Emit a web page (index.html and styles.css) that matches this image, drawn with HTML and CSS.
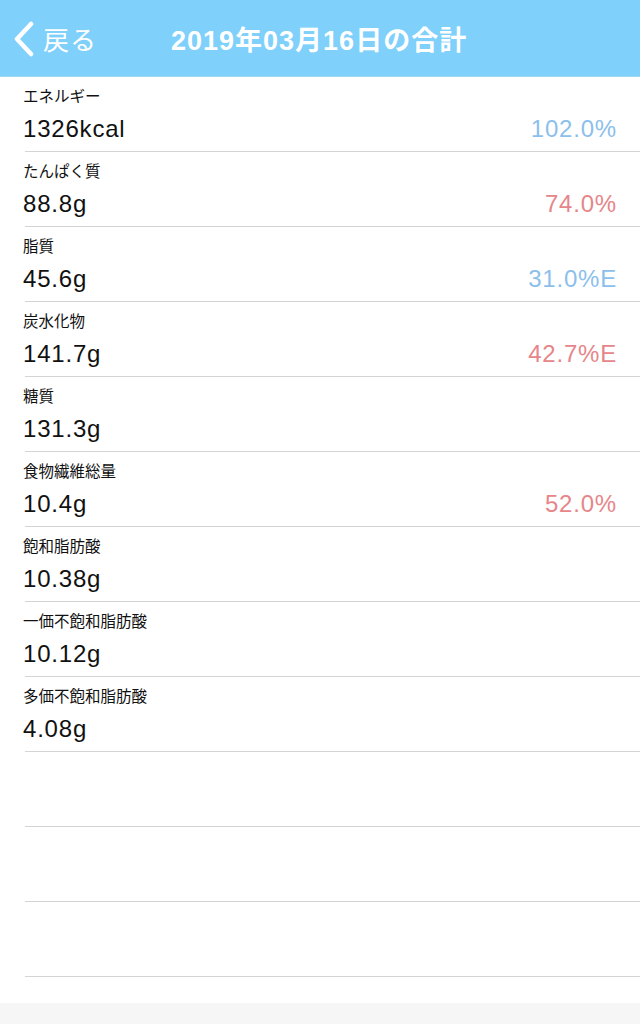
FILE: index.html
```html
<!DOCTYPE html>
<html lang="ja">
<head>
<meta charset="UTF-8">
<meta name="viewport" content="width=device-width, initial-scale=1.0">
<title>2019年03月16日の合計</title>
<link rel="stylesheet" href="styles.css">
</head>
<body>
    <div class="header">
        <div class="back">
            <svg class="chevron" width="22" height="36" viewBox="0 0 22 36">
                <path d="M18 3 L4 18 L18 33" fill="none" stroke="#fff" stroke-width="4.5" stroke-linecap="round" stroke-linejoin="round"/>
            </svg>
            <span>戻る</span>
        </div>
        <h1>2019年03月16日の合計</h1>
    </div>

    <div class="lista">
        <div class="linha">
            <div class="rotulo">エネルギー</div>
            <div class="valores"><span>1326kcal</span><span class="azul">102.0%</span></div>
        </div>
        <div class="linha">
            <div class="rotulo">たんぱく質</div>
            <div class="valores"><span>88.8g</span><span class="vermelho">74.0%</span></div>
        </div>
        <div class="linha">
            <div class="rotulo">脂質</div>
            <div class="valores"><span>45.6g</span><span class="azul">31.0%E</span></div>
        </div>
        <div class="linha">
            <div class="rotulo">炭水化物</div>
            <div class="valores"><span>141.7g</span><span class="vermelho">42.7%E</span></div>
        </div>
        <div class="linha">
            <div class="rotulo">糖質</div>
            <div class="valores"><span>131.3g</span></div>
        </div>
        <div class="linha">
            <div class="rotulo">食物繊維総量</div>
            <div class="valores"><span>10.4g</span><span class="vermelho">52.0%</span></div>
        </div>
        <div class="linha">
            <div class="rotulo">飽和脂肪酸</div>
            <div class="valores"><span>10.38g</span></div>
        </div>
        <div class="linha">
            <div class="rotulo">一価不飽和脂肪酸</div>
            <div class="valores"><span>10.12g</span></div>
        </div>
        <div class="linha">
            <div class="rotulo">多価不飽和脂肪酸</div>
            <div class="valores"><span>4.08g</span></div>
        </div>
        <div class="linha vazia"></div>
        <div class="linha vazia"></div>
        <div class="linha vazia"></div>
    </div>

    <div class="rodape"></div>
</body>
</html>
```

FILE: styles.css
```css
body {
    font-family: "Liberation Sans", "Noto Sans CJK JP", sans-serif;
    margin: 0;
    padding: 0;
    background-color: #fff;
    height: 1024px;
    display: flex;
    flex-direction: column;
    overflow: hidden;
}

.header {
    height: 77px;
    flex-shrink: 0;
    background-color: #80d0fc;
    display: flex;
    align-items: center;
    color: #fff;
    box-sizing: border-box;
    border-bottom: 1px solid #9fd6f2;
}

.back {
    display: flex;
    align-items: center;
    padding-left: 13px;
    width: 158px;
    box-sizing: border-box;
}

.chevron {
    margin-top: 1px;
}

.back span {
    font-family: "Noto Sans CJK JP", sans-serif;
    font-size: 26px;
    margin-left: 8px;
    letter-spacing: 1px;
}

h1 {
    margin: 0;
    font-size: 27px;
    font-weight: bold;
    letter-spacing: 1px;
    padding-left: 13px;
}

.lista {
    padding-left: 25px;
    flex: 1;
}

.linha {
    height: 75px;
    box-sizing: border-box;
    border-bottom: 1px solid #d4d4d4;
    padding: 8px 23px 0 0;
}

.rotulo {
    margin-left: -2px;
    font-family: "Noto Sans CJK JP", sans-serif;
    font-size: 15.5px;
    line-height: 20px;
    color: #111;
}

.valores {
    margin-left: -2px;
    margin-top: 9px;
    display: flex;
    justify-content: space-between;
    font-size: 24px;
    letter-spacing: 0.8px;
    line-height: 30px;
    color: #111;
}

.azul {
    color: #8cbfec;
}

.vermelho {
    color: #e6868a;
}

.rodape {
    height: 21px;
    flex-shrink: 0;
    background-color: #f6f6f6;
}
```
